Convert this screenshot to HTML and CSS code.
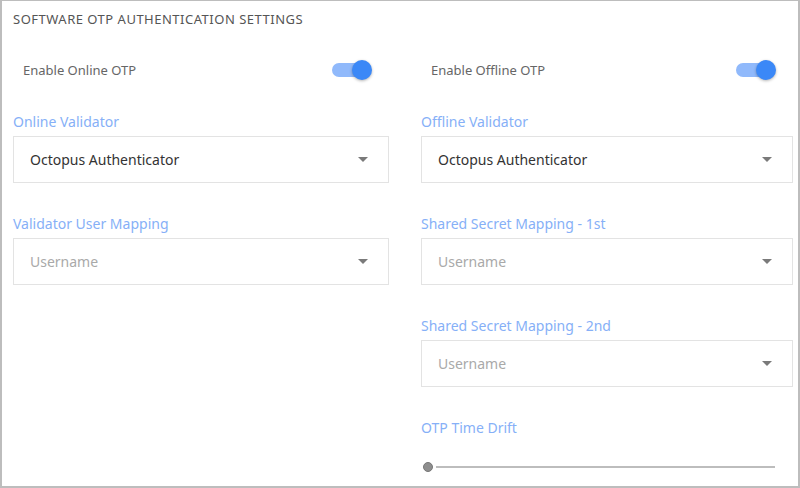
FILE: index.html
```html
<!DOCTYPE html>
<html lang="en">
<head>
<meta charset="utf-8" />
<title>Software OTP Authentication Settings</title>
<link rel="stylesheet" href="styles.css">
</head>
<body>

<section class="panel">
	<h1 class="title">SOFTWARE OTP AUTHENTICATION SETTINGS</h1>
	<div class="cols">
		<div class="col">
			<div class="switch-row">
				<span>Enable Online OTP</span>
				<span class="switch on"><i class="track"></i><i class="thumb"></i></span>
			</div>
			<div class="field">
				<label>Online Validator</label>
				<div class="select">Octopus Authenticator<i class="caret"></i></div>
			</div>
			<div class="field">
				<label>Validator User Mapping</label>
				<div class="select empty">Username<i class="caret"></i></div>
			</div>
		</div>
		<div class="col">
			<div class="switch-row">
				<span>Enable Offline OTP</span>
				<span class="switch on"><i class="track"></i><i class="thumb"></i></span>
			</div>
			<div class="field">
				<label>Offline Validator</label>
				<div class="select">Octopus Authenticator<i class="caret"></i></div>
			</div>
			<div class="field">
				<label>Shared Secret Mapping - 1st</label>
				<div class="select empty">Username<i class="caret"></i></div>
			</div>
			<div class="field">
				<label>Shared Secret Mapping - 2nd</label>
				<div class="select empty">Username<i class="caret"></i></div>
			</div>
			<div class="field">
				<label>OTP Time Drift</label>
				<div class="slider"><i class="knob"></i><i class="rail"></i></div>
			</div>
		</div>
	</div>
</section>

</body>
</html>
```

FILE: styles.css
```css
body {
	margin: 0;
	font-family: "Noto Sans", "Open Sans", sans-serif;
	background: #fff;
}

.panel {
	box-sizing: border-box;
	width: 800px;
	height: 488px;
	border: 2px solid #bdbdbd;
	border-top-width: 1px;
	padding: 0 5px 0 11px;
	overflow: hidden;
}

.title {
	margin: 0;
	padding-top: 9px;
	font-size: 13px;
	line-height: 18px;
	letter-spacing: 0.5px;
	font-weight: normal;
	color: #555;
}

.cols {
	display: grid;
	grid-template-columns: 376px 372px;
	column-gap: 32px;
}

/* --------------------------------- */

.switch-row {
	display: flex;
	justify-content: space-between;
	align-items: center;
	height: 28px;
	margin: 28px 0;
	padding: 0 17px 0 10px;
	font-size: 13px;
	color: #666;
}

.switch {
	position: relative;
	width: 40px;
	height: 20px;
}
.switch .track {
	position: absolute;
	left: 0; top: 3px;
	width: 34px;
	height: 14px;
	border-radius: 7px;
	background: #90b9fb;
}
.switch .thumb {
	position: absolute;
	right: 0; top: 0;
	width: 20px;
	height: 20px;
	border-radius: 50%;
	background: #3b88f7;
	box-shadow: 0 1px 3px rgba(0,0,0,0.3);
}

/* --------------------------------- */

.field {
	margin-bottom: 31px;
}
.field label {
	display: block;
	font-size: 14px;
	line-height: 20px;
	margin-bottom: 4px;
	color: #86b0f7;
}

.select {
	box-sizing: border-box;
	display: flex;
	align-items: center;
	height: 47px;
	padding: 0 20px 0 16px;
	border: 1px solid #e3e3e3;
	font-size: 14px;
	color: #333;
}
.select.empty {
	color: #a9a9a9;
}
.select .caret {
	margin-left: auto;
	width: 0; height: 0;
	border-left: 5px solid transparent;
	border-right: 5px solid transparent;
	border-top: 5px solid #7a7a7a;
}

/* --------------------------------- */

.slider {
	display: flex;
	align-items: center;
	height: 20px;
	margin-top: 19px;
	padding: 0 18px 0 2px;
}
.slider .knob {
	box-sizing: border-box;
	width: 10px;
	height: 10px;
	border-radius: 50%;
	background: #8e8e8e;
	border: 1px solid #777;
}
.slider .rail {
	flex: 1;
	height: 2px;
	margin-left: 3px;
	background: #bdbdbd;
}
```
